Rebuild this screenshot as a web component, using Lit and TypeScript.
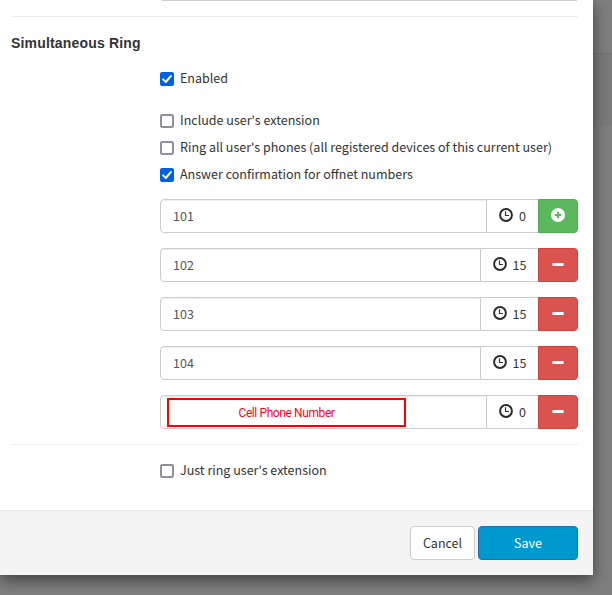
import { LitElement, html, css, svg } from "lit";
import { customElement, property } from "lit/decorators.js";

@customElement("check-line")
class CheckLine extends LitElement {
  @property({ type: Boolean }) checked = false;
  @property() label = "";

  static styles = css`
    :host { display: flex; align-items: center; height: 27px; }
    .box { flex: none; width: 14px; height: 14px; margin-right: 6px; }
    .label { white-space: nowrap; line-height: 20px; padding-bottom: 1px; }
  `;

  render() {
    return html`
      <svg class="box" viewBox="0 0 14 14">
        ${this.checked
          ? svg`<rect width="14" height="14" rx="2" fill="#0060df"/>
              <path d="M3.1 7.4 L5.8 10 L10.9 4" fill="none" stroke="#fff" stroke-width="2" stroke-linecap="round" stroke-linejoin="round"/>`
          : svg`<rect x="1" y="1" width="12" height="12" rx="1.2" fill="#fff" stroke="#8f8f9d" stroke-width="2"/>`}
      </svg>
      <span class="label">${this.label}</span>
    `;
  }
}

@customElement("ring-row")
class RingRow extends LitElement {
  @property() number = "";
  @property() note = "";
  @property() delay = "0";
  @property() action = "remove";

  static styles = css`
    :host { display: flex; height: 34px; }
    .input {
      flex: 1; box-sizing: border-box; padding: 0 12px; line-height: 32px; color: #555;
      border: 1px solid #ccc; border-radius: 4px 0 0 4px;
      box-shadow: inset 0 1px 1px rgba(0, 0, 0, 0.075); position: relative;
    }
    .note {
      position: absolute; left: 6px; top: 2px; width: 239px; height: 29px; box-sizing: border-box;
      border: 2px solid #f00; background: #fff; color: #ff0024; text-align: center;
      font: 12px/26px Roboto, sans-serif; letter-spacing: -0.4px;
    }
    .addon {
      display: flex; align-items: center; box-sizing: border-box; width: 51px; padding-left: 12px;
      border: solid #ccc; border-width: 1px 0; color: #333;
    }
    .wide { width: 57px; }
    .clock { width: 14px; height: 14px; margin: -2px 6px 0 0; }
    .wide .clock { margin-right: 5.5px; }
    .btn {
      width: 40px; box-sizing: border-box; display: flex; align-items: center; justify-content: center;
      border: 1px solid #d43f3a; background: #d9534f; border-radius: 0 4px 4px 0;
    }
    .add { background: #5cb85c; border-color: #4cae4c; }
    .btn svg { width: 14px; height: 14px; margin-top: -2px; }
  `;

  render() {
    const add = this.action === "add";
    return html`
      <div class="input">${this.number}${this.note ? html`<span class="note">${this.note}</span>` : null}</div>
      <div class="addon ${this.delay.length > 1 ? "wide" : ""}">
        <svg class="clock" viewBox="0 0 14 14">
          <circle cx="7" cy="7" r="5.9" fill="none" stroke="#2b2b2b" stroke-width="2"/>
          <path d="M6.5 3.2 V7.5 H10" fill="none" stroke="#333" stroke-width="1.2"/>
        </svg>
        <span>${this.delay}</span>
      </div>
      <div class="btn ${add ? "add" : ""}">
        <svg viewBox="0 0 14 14">
          ${add
            ? svg`<circle cx="7" cy="7" r="7" fill="#fff"/><path d="M7 3.8 V10.2 M3.8 7 H10.2" stroke="#5cb85c" stroke-width="2"/>`
            : svg`<rect x="1.4" y="6" width="11.2" height="3" rx=".3" fill="#fff"/>`}
        </svg>
      </div>
    `;
  }
}

@customElement("app-root")
class AppRoot extends LitElement {
  static styles = css`
    :host {
      display: block; width: 612px; height: 595px; overflow: hidden;
      background: linear-gradient(#7f7f7f 53px, #747474 53px 54px, #7b7b7b 54px 127px, #7f7f7f 127px);
      font: 12.53px/20px "Noto Sans CJK SC", sans-serif; color: #333;
    }
    .modal {
      width: 593px; height: 575px; box-sizing: border-box; background: #fff;
      box-shadow: 0 5px 15px rgba(0, 0, 0, 0.5); display: flex; flex-direction: column;
    }
    .body { flex: 1; padding: 0 15px 0 11px; }
    .previous { margin: 0 1px 15px 151px; height: 1px; background: #ccc; }
    .rule { height: 1px; background: #eee; }
    .title { margin: 16px 0 0; font: bold 14px/20px "Liberation Sans", sans-serif; letter-spacing: 0.17px; }
    .fields { margin-left: 149px; }
    .enabled { margin: 12px 0 15px; }
    .rows { display: flex; flex-direction: column; gap: 15px; margin: 11px 0 15px; }
    .just { margin-top: 12px; }
    .footer {
      height: 65px; box-sizing: border-box; border-top: 1px solid #e5e5e5; background: #f4f4f4;
      padding: 15px 15px 0; display: flex; justify-content: flex-end; gap: 3px;
    }
    .button {
      box-sizing: border-box; width: 65px; height: 34px; line-height: 32px; text-align: center;
      border: 1px solid #ccc; border-radius: 4px; background: #fff;
    }
    .save { width: 100px; color: #fff; background: #0099cf; border-color: #2070ad; }
  `;

  render() {
    return html`
      <div class="modal">
        <div class="body">
          <div class="previous"></div>
          <div class="rule"></div>
          <h4 class="title">Simultaneous Ring</h4>
          <div class="fields">
            <check-line class="enabled" checked label="Enabled"></check-line>
            <check-line label="Include user's extension"></check-line>
            <check-line label="Ring all user's phones (all registered devices of this current user)"></check-line>
            <check-line checked label="Answer confirmation for offnet numbers"></check-line>
            <div class="rows">
              <ring-row number="101" delay="0" action="add"></ring-row>
              <ring-row number="102" delay="15"></ring-row>
              <ring-row number="103" delay="15"></ring-row>
              <ring-row number="104" delay="15"></ring-row>
              <ring-row note="Cell Phone Number" delay="0"></ring-row>
            </div>
          </div>
          <div class="rule"></div>
          <div class="fields"><check-line class="just" label="Just ring user's extension"></check-line></div>
        </div>
        <div class="footer">
          <div class="button">Cancel</div>
          <div class="button save">Save</div>
        </div>
      </div>
    `;
  }
}
